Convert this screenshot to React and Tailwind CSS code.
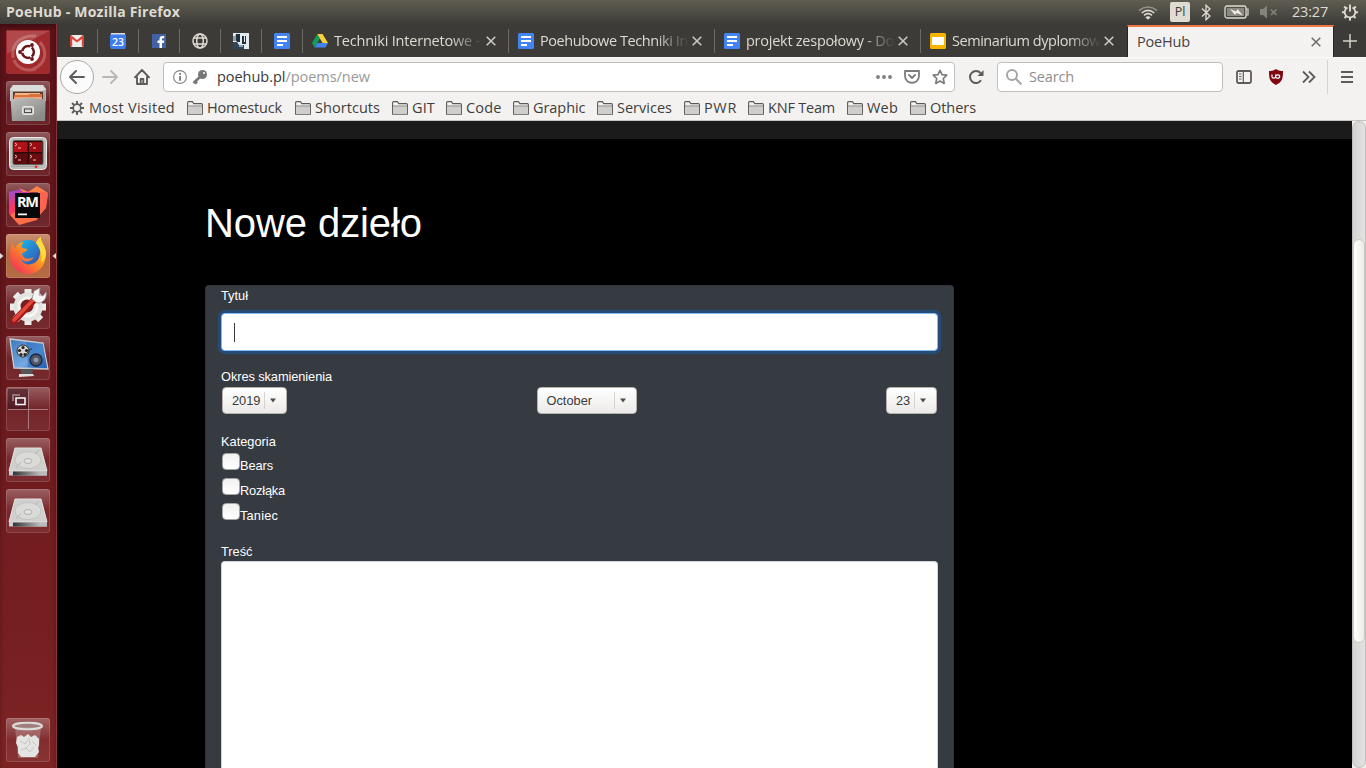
import { useLayoutEffect, useRef, useState } from "react";

/* Text run whose tracking is tuned so that it fills a given advance width. */
function Fit({ w, className = "", children }) {
  const ref = useRef(null);
  const [ls, setLs] = useState(0);
  useLayoutEffect(() => {
    const el = ref.current;
    const n = el.textContent.length;
    setLs((w - el.getBoundingClientRect().width) / n);
  }, [w]);
  return (
    <span ref={ref} className={"inline-block shrink-0 whitespace-pre " + className} style={{ letterSpacing: ls + "px" }}>
      {children}
    </span>
  );
}

/* ---------- top panel ---------- */

function TopPanel() {
  return (
    <header className="flex h-6 shrink-0 items-center bg-linear-to-b from-[#5f5d52] to-[#3d3c38] pl-1.5 text-[#dfdbd2]">
      <Fit w={174} className="text-[14px] leading-6 font-bold">PoeHub - Mozilla Firefox</Fit>
      <svg className="ml-auto mr-[12px] mt-px" width="20" height="16" viewBox="0 0 20 16" fill="none" stroke="#dfdbd2" strokeWidth="1.6">
        <path d="M1 5.5Q10-1.5 19 5.5" stroke="#96938a" />
        <path d="M3.7 8Q10 2.8 16.300 8" />
        <path d="M6 10.300Q10 7 14 10.300" />
        <path d="M7.300 12.300Q10 10 12.700 12.300L10 14.800z" fill="#dfdbd2" stroke="none" />
      </svg>
      <div className="flex h-5 w-5 items-center justify-center rounded-[2px] bg-[#dfdbd2] text-[12.5px] text-[#3c3b37]">Pl</div>
      <svg className="ml-[10px]" width="12" height="17" viewBox="0 0 12 17" fill="none" stroke="#dfdbd2" strokeWidth="1.300">
        <path d="M2 4.500l8 7.500-4 3.800V1.200l4 3.800-8 7.500" />
      </svg>
      <svg className="ml-[12px]" width="25" height="14" viewBox="0 0 25 14">
        <rect x="1" y="1" width="21" height="12" rx="2" fill="none" stroke="#dfdbd2" strokeWidth="1.300" />
        <rect x="3" y="3" width="17" height="8" fill="#8b887f" />
        <path d="M22 4h2v6H22" fill="none" stroke="#dfdbd2" strokeWidth="1.200" />
        <path d="M6 4l6 2.500 1.500-2.500 5.500 6.500-6.500-2.500-1.500 2z" fill="#efece5" />
      </svg>
      <svg className="ml-[11px]" width="18" height="14" viewBox="0 0 18 14">
        <path d="M0 4h3l4-3.500v13L3 10H0z" fill="#85827a" />
        <path d="M11 4.500l5.500 5.500m0-5.500L11 10" stroke="#85827a" strokeWidth="1.700" />
      </svg>
      <Fit w={36} className="ml-[14px] text-[14.5px] leading-6">23:27</Fit>
      <svg className="mr-[7px] ml-[13px]" width="18" height="18" viewBox="0 0 18 18" fill="none" stroke="#dfdbd2">
        <path d="M6.500 4.500a5.300 5.300 0 1 0 5 0" strokeWidth="1.700" />
        <path d="M9 1.500v7" strokeWidth="1.900" />
        <path d="M14 9.300h3M1 9.300h3M9 14.500v3M12.500 13l2 2M5.500 13l-2 2M12.800 5.500l2-2M5.200 5.500l-2-2" strokeWidth="2" />
      </svg>
    </header>
  );
}

/* ---------- launcher ---------- */

const UbuntuIcon = () => (
  <svg width="44" height="44" viewBox="0 0 44 44">
    <rect width="44" height="44" rx="3" fill="#a12a2c" />
    <path d="M7 28C5 14 14 5 30 6M34 12c8 10 6 22-7 27M30 39c-10 3-19-1-22-9" fill="none" stroke="#cf8583" strokeWidth="3" opacity=".5" />
    <path d="M1 1h42L1 24z" fill="#fff" opacity=".15" />
    <circle cx="22" cy="22" r="12" fill="#fff" />
    <circle cx="22" cy="22" r="5.800" fill="none" stroke="#6a161b" strokeWidth="2.700" />
    <path d="M22 22H10M22 22l5.500-9M22 22l5.500 9" stroke="#fff" strokeWidth="1.500" />
    <circle cx="22" cy="22" r="4.400" fill="#fff" />
    <g fill="#6a161b"><circle cx="14" cy="22" r="1.900" /><circle cx="26" cy="15" r="1.900" /><circle cx="26" cy="29" r="1.900" /></g>
  </svg>
);

const FilesIcon = () => (
  <svg width="44" height="44" viewBox="0 0 44 44">
    <defs><linearGradient id="fg" x1="0" y1="0" x2=".6" y2="1"><stop stopColor="#cbcbc9" /><stop offset="1" stopColor="#8b8b89" /></linearGradient></defs>
    <path d="M7 4h30l3 4v12H4V8z" fill="#dcdcda" />
    <path d="M7 10.500h30v9H7z" fill="#5c3a2c" />
    <path d="M9 12h25v2H9z" fill="#f1b887" /><path d="M8 14h14l2-1h12v6H8z" fill="#d9703f" />
    <path d="M8 16h28v2H8z" fill="#eda87b" />
    <path d="M4 9h3v9h6l2-1h14l1 1h7V9h3l-1 31H6z" fill="url(#fg)" />
    <rect x="16.500" y="25.500" width="11" height="8" rx="1.500" fill="#c9c9c7" stroke="#e8e8e8" />
    <rect x="18.500" y="28" width="7" height="3.500" fill="#ddd" stroke="#4d4d4d" />
  </svg>
);

const TerminatorIcon = () => (
  <svg width="44" height="44" viewBox="0 0 44 44">
    <rect x="3.500" y="5.500" width="37" height="32" rx="4" fill="#bdbdb9" stroke="#ecece9" />
    <rect x="7" y="8.500" width="30" height="24" rx="1.500" fill="#2c0809" stroke="#5d5d59" />
    <g><path d="M8 10h13.500v10H8z" fill="#b01018" /><path d="M23 10h13v10H23z" fill="#9a0d13" /><path d="M8 21.500h13.500V32H8z" fill="#5e0b0f" /><path d="M23 21.500h13V32H23z" fill="#6b0c11" /></g>
    <g stroke="#f5b8b8" fill="none" strokeWidth="1"><path d="M9 11l2 1.500L9 14m3 2h3M24 11l2 1.500-2 1.500m3 2h3M9 23l2 1.500L9 26m3 2h3M24 23l2 1.500-2 1.500m3 2h3" /></g>
    <path d="M5 34.500h28" stroke="#a3a39f" /><circle cx="30" cy="34.800" r="1.300" fill="#e22" />
  </svg>
);

const RubyMineIcon = () => (
  <svg width="44" height="44" viewBox="0 0 44 44">
    <defs>
      <linearGradient id="rm" x1="0" y1="0" x2=".4" y2="1"><stop stopColor="#8a52f0" /><stop offset=".5" stopColor="#f9336d" /><stop offset="1" stopColor="#ff4a50" /></linearGradient>
    </defs>
    <path d="M3 9l13-3 12 5-3 28L3 31z" fill="url(#rm)" />
    <path d="M13 5l9 4 9-6 11 7-2 15-8 9V9H17z" fill="#fd8348" />
    <path d="M34 8l8 2-2 15-6 6z" fill="#f9525c" opacity=".6" />
    <path d="M4 32l6-4h24l-3 9-18 5z" fill="#ff6f47" />
    <rect x="9" y="10" width="25" height="25" fill="#080808" />
    <text x="11" y="23.500" fill="#fff" fontSize="14.500" fontWeight="700" fontFamily="Open Sans, sans-serif" textLength="22">RM</text>
    <path d="M12 30.500h9v1.800h-9z" fill="#fff" />
  </svg>
);

const FirefoxIcon = () => (
  <svg width="44" height="44" viewBox="0 0 44 44">
    <defs>
      <linearGradient id="ffa" x1="1" y1="0" x2=".1" y2="1"><stop stopColor="#ffe93f" /><stop offset=".45" stopColor="#ff9a1f" /><stop offset="1" stopColor="#f3245f" /></linearGradient>
      <linearGradient id="ffb" x1="0" y1="0" x2="1" y2="1"><stop stopColor="#19c5f0" /><stop offset="1" stopColor="#3a3fa8" /></linearGradient>
    </defs>
    <circle cx="22" cy="20" r="14" fill="url(#ffb)" />
    <path d="M7 9c0 3 1 4 2 5 2-4 5-6 9-6-2 2-3 4-2 6l5 1c0 3-4 3-5 5 1 5 7 6 12 3-3 5-10 6-13 2 2 8 17 8 19-5 1-6-2-9-4-11 1-3 3-5 5-6-1 5 5 9 5 17 0 12-8 20-18 20S4 32 4 22c0-6 1-10 3-13z" fill="url(#ffa)" />
    <path d="M30 9c1-3 3-5 5-6-1 5 5 9 5 17-1 5-3 8-5 9 2-9-1-14-5-20z" fill="#ffda3b" />
  </svg>
);

const SettingsIcon = () => (
  <svg width="44" height="44" viewBox="0 0 44 44">
    <g stroke="#ececea" strokeWidth="7"><path d="M22 4v36M4 22h36M9.300 9.300l25.400 25.400M34.700 9.300L9.300 34.700" /></g>
    <circle cx="22" cy="22" r="14.500" fill="#e3e3df" />
    <circle cx="22" cy="22" r="9" fill="none" stroke="#f5f5f3" strokeWidth="3" />
    <circle cx="21" cy="21" r="6.500" fill="#742124" />
    <path d="M8 36L28 15" stroke="#a61515" strokeWidth="6.500" strokeLinecap="round" />
    <path d="M8 35L27 15" stroke="#e04a3c" strokeWidth="3.500" strokeLinecap="round" />
    <path d="M26 14l2-8 6-3-1 7 4 1 3-4c1 6-2 11-9 11z" fill="#f4f4f2" stroke="#9c9c99" strokeWidth=".8" />
  </svg>
);

const DisplayIcon = () => (
  <svg width="44" height="44" viewBox="0 0 44 44">
    <defs><linearGradient id="dg" x1="0" y1="0" x2="1" y2="1"><stop stopColor="#3c78bd" /><stop offset=".6" stopColor="#75a9e0" /><stop offset="1" stopColor="#2456a0" /></linearGradient></defs>
    <path d="M4 3l33 4 5 26-34-1z" fill="url(#dg)" stroke="#c8ccd0" strokeWidth="1.300" />
    <path d="M20 6l17 2 4 24-19-1z" fill="#1f68bd" opacity=".5" />
    <path d="M14 33h13l-1 6H16z" fill="#555" /><path d="M13 38h14l1 2-15 1z" fill="#ddd" />
    <circle cx="17" cy="15" r="6" fill="#d6d6d3" stroke="#333" />
    <g fill="#222"><circle cx="17" cy="11.500" r="1.600" /><circle cx="13.500" cy="14.500" r="1.600" /><circle cx="20.500" cy="14.500" r="1.600" /><circle cx="15" cy="18.500" r="1.600" /><circle cx="19" cy="18.500" r="1.600" /></g>
    <path d="M19 20l5-7 2 0" stroke="#333" fill="none" />
    <circle cx="30" cy="24" r="6" fill="#4d5666" stroke="#1c2a42" strokeWidth="1.500" /><circle cx="30" cy="24" r="2.500" fill="#8d97a8" />
  </svg>
);

const WorkspaceIcon = () => (
  <svg width="44" height="44" viewBox="0 0 44 44">
    <path d="M2 2h20v20H2z" fill="#320c18" opacity=".5" />
    <path d="M22.500 2v40M2 22.500h40" stroke="#a87b7e" />
    <path d="M7 14V8h7" fill="none" stroke="#8f7478" strokeWidth="2" />
    <rect x="10" y="11" width="9" height="6.500" fill="none" stroke="#fff" strokeWidth="1.500" />
  </svg>
);

const DriveIcon = () => (
  <svg width="44" height="44" viewBox="0 0 44 44">
    <defs><linearGradient id="hd"><stop stopColor="#333" /><stop offset=".8" stopColor="#bbb" /></linearGradient></defs>
    <path d="M9 10h26l6 23H3z" fill="#cfcfcd" stroke="#e3e3e1" />
    <ellipse cx="22" cy="22" rx="13" ry="8.500" fill="#dadad8" stroke="#c2c2c0" />
    <ellipse cx="22" cy="23" rx="4" ry="2.500" fill="#e2e2e0" stroke="#b2b2b0" />
    <path d="M10 30l5-6M33 12l-4 4" stroke="#b5b5b3" />
    <path d="M3 33h38v4.500H3z" fill="#ccc" /><path d="M7 33.500h34v4H7z" fill="url(#hd)" />
  </svg>
);

const TrashIcon = () => (
  <svg width="44" height="44" viewBox="0 0 44 44">
    <path d="M9 9h26l-3 31H12z" fill="#c6a3a2" opacity=".4" />
    <path d="M11 19l4-2 3 2 4-3 3 3 4-2 4 4v6l-1 3 1 4-4 5H15l-3-4v-6l-2-4z" fill="#e4e4e2" />
    <path d="M14 23l5 3 3-4m4 1l4 4m-15 5l5-2 4 4 4-5M23 20l1 6-5 5" stroke="#c6c6c3" fill="none" />
    <ellipse cx="21.500" cy="8" rx="14.500" ry="3.300" fill="#aaa" opacity=".5" />
    <ellipse cx="21.500" cy="8" rx="14.500" ry="3.300" fill="none" stroke="#dcdcd9" strokeWidth="2" />
  </svg>
);

function Tile({ icon: Icon, active }) {
  return (
    <div className={"flex h-11 w-11 shrink-0 overflow-hidden rounded-[3px] shadow-[inset_0_0_0_1px_rgba(255,255,255,0.13)] " + (active ? "bg-linear-to-b from-[#c98f70] via-[#b0683f] to-[#b66c45]" : "bg-linear-to-b from-white/30 via-white/5 to-white/8")}>
      <Icon />
    </div>
  );
}

const TILES = [UbuntuIcon, FilesIcon, TerminatorIcon, RubyMineIcon, FirefoxIcon, SettingsIcon, DisplayIcon, WorkspaceIcon, DriveIcon, DriveIcon];

function Launcher() {
  return (
    <aside className="relative flex w-[57px] shrink-0 flex-col items-start gap-[7px] border-r border-[#873538] bg-linear-to-b from-[#5a1218] via-[#6b191d] to-[#7d2324] pt-1.5 pb-1.5 pl-1.5 shadow-[inset_0_3px_4px_rgba(0,0,0,0.3)]">
      {TILES.map((icon, i) => <Tile key={i} icon={icon} active={i === 4} />)}
      <div className="mt-auto"><Tile icon={TrashIcon} /></div>
      <svg className="absolute top-[228px] left-0" width="56" height="8" viewBox="0 0 56 8" fill="#ddd"><path d="M0 1l3.500 3-3.500 3zM56 1l-3.500 3 3.500 3z" /></svg>
    </aside>
  );
}

/* ---------- tabs ---------- */

const Gmail = () => <svg width="14" height="12" viewBox="0 0 14 12"><path d="M1 0h12v12H1z" fill="#eee" /><path d="M0 1v10.500h2.200V4L7 7.500 11.800 4v7.500H14V1L13 0 7 5 1 0z" fill="#d9473b" /></svg>;
const Calendar = () => (
  <svg width="16" height="16" viewBox="0 0 16 16"><path d="M1 0h14v3H1z" fill="#ddd" /><path d="M0 1.500h16V13l-1 3H1l-1-3z" fill="#3f7cec" /><text x="8" y="12.500" textAnchor="middle" fontSize="10.500" fontWeight="600" fill="#fff" fontFamily="Open Sans, sans-serif">23</text></svg>
);
const Facebook = () => <svg width="14" height="14" viewBox="0 0 14 14"><path d="M0 0h14v14H0z" fill="#4361a5" /><path d="M7.500 14V9H5.500V6.500h2V5c0-2 1-3 3-3h1.700v2.300H11c-.8 0-1 .3-1 1v1.200h2.200L11.800 9H10v5z" fill="#fff" /></svg>;
const Globe = () => <svg width="16" height="16" viewBox="0 0 16 16" fill="none" stroke="#dfdbd2" strokeWidth="1.500"><circle cx="8" cy="8" r="7" /><ellipse cx="8" cy="8" rx="3.300" ry="7" /><path d="M2 5h12M2 11h12" /></svg>;
const Mask = () => (
  <svg width="16" height="16" viewBox="0 0 16 16">
    <path d="M0 0h16v16H0z" fill="#e3ebee" />
    <path d="M0 9h4l2 3h5v4H0z" fill="#31455a" /><path d="M3 1h4v8H4L2 6zM9 3h2v6h1V3h1v8H9z" fill="#22303e" />
    <path d="M0 3h3v5H0zM6 12h4v2H6z" fill="#8aa3b5" />
  </svg>
);
const Docs = () => <svg className="shrink-0" width="16" height="16" viewBox="0 0 16 16"><rect width="16" height="16" rx="1.500" fill="#4384f4" /><path d="M3 4h10M3 8h10M3 12h6" stroke="#fff" strokeWidth="2" /></svg>;
const Slides = () => <svg className="shrink-0" width="16" height="16" viewBox="0 0 16 16"><rect width="16" height="16" rx="1.500" fill="#f5b400" /><path d="M2 4h12v8H2z" fill="#fff" /></svg>;
const Drive = () => <svg className="shrink-0" width="16" height="14" viewBox="0 0 16 14"><path d="M5.300 0L0 9l2.700 4.500L8 4.500z" fill="#0f9d58" /><path d="M5.300 0h5.200L16 9h-5.400z" fill="#fdd03b" /><path d="M5.400 9H16l-2.700 4.500H2.700z" fill="#4384f4" /></svg>;
const Cross = ({ color }) => <svg className="shrink-0" width="10" height="10" viewBox="0 0 10 10"><path d="M.7.7l8.600 8.600M9.300.7L.7 9.300" stroke={color} strokeWidth="1.600" /></svg>;

const PINNED = [Gmail, Calendar, Facebook, Globe, Mask, Docs];
const TABS = [
  { icon: Drive, text: "Techniki Internetowe -", w: 146 },
  { icon: Docs, text: "Poehubowe Techniki In", w: 148 },
  { icon: Docs, text: "projekt zespołowy - Do", w: 148 },
  { icon: Slides, text: "Seminarium dyplomow", w: 148 },
];

function TabBar() {
  return (
    <div className="flex h-[33px] shrink-0 bg-[#3c3b37] text-[14.5px] text-[#dfdbd2]">
      {PINNED.map((Icon, i) => (
        <div key={i} className="flex w-[41px] shrink-0 items-center">
          <div className="flex h-full flex-1 items-center justify-center"><Icon /></div>
          <div className="h-6 w-px bg-[#6c6a64]" />
        </div>
      ))}
      {TABS.map(({ icon: Icon, text, w }, i) => (
        <div key={i} className="flex w-[206px] shrink-0 items-center pl-[9px]">
          <Icon />
          <div className="ml-1.5 h-[33px] w-[149px] mask-r-from-78% mask-r-to-100%">
            <Fit w={w} className="leading-[33px]">{text}</Fit>
          </div>
          <div className="ml-[3px] flex flex-1"><Cross color="#cbc8c0" /></div>
          {i < 3 && <div className="h-6 w-px bg-[#6c6a64]" />}
        </div>
      ))}
      <div className="mt-px flex h-8 w-[207px] shrink-0 items-center justify-between border-x border-t-2 border-x-[#25241f] border-t-[#f07746] bg-[#f4f2f1] pr-3 pl-[9px] text-[#45423f]">
        <Fit w={53} className="leading-[30px]">PoeHub</Fit>
        <Cross color="#706d69" />
      </div>
      <div className="flex flex-1 items-center justify-center">
        <svg width="14" height="14" viewBox="0 0 14 14"><path d="M7 0v14M0 7h14" stroke="#d5d1c8" strokeWidth="1.500" /></svg>
      </div>
    </div>
  );
}

/* ---------- navigation toolbar ---------- */

function NavBar() {
  return (
    <div className="flex h-[39px] shrink-0 items-center border-t border-[#fbfaf9] pl-[3px] text-[14.5px]">
      <div className="flex h-[34px] w-[34px] items-center justify-center rounded-full border border-[#aaa8a6] bg-[#fbfbfb]">
        <svg width="16" height="14" viewBox="0 0 16 14" fill="none" stroke="#5c5c5c" strokeWidth="1.900" strokeLinecap="round"><path d="M1 7h14M7 1L1 7l6 6" strokeLinejoin="round" /></svg>
      </div>
      <svg className="ml-2" width="16" height="14" viewBox="0 0 16 14" fill="none" stroke="#b8b7b6" strokeWidth="1.900" strokeLinecap="round"><path d="M1 7h14M9 1l6 6-6 6" strokeLinejoin="round" /></svg>
      <svg className="ml-4" width="16" height="16" viewBox="0 0 16 16" fill="none" stroke="#5c5c5c" strokeWidth="1.900" strokeLinejoin="round" strokeLinecap="round"><path d="M1 8.300L8 1l7 7.300M3 8v7h10V8M6.700 14.500V10h2.600v4.500" /></svg>
      <div className="ml-[13px] flex h-[30px] w-[792px] shrink-0 items-center rounded-[4px] border border-[#c1bebb] bg-white pr-1.5 pl-2">
        <svg width="16" height="16" viewBox="0 0 16 16"><circle cx="8" cy="8" r="6.400" fill="none" stroke="#858585" strokeWidth="1.100" /><path d="M7.200 7h1.800v4.700H7.200zM7.200 4h1.800v1.800H7.200z" fill="#777" /></svg>
        <svg className="ml-1" width="16" height="16" viewBox="0 0 16 16"><path d="M1.500 14L9 7M3 12.500l2 2" stroke="#777" strokeWidth="2.700" /><circle cx="10.500" cy="5.500" r="4.500" fill="#777" /><circle cx="12" cy="4" r="1" fill="#fff" /></svg>
        <Fit w={153} className="ml-[9px] leading-7 text-[#999]"><span className="text-[#383838]">poehub.pl</span>/poems/new</Fit>
        <svg className="ml-auto" width="16" height="4" viewBox="0 0 16 4" fill="#7c7c7c"><circle cx="2" cy="2" r="1.900" /><circle cx="8" cy="2" r="1.900" /><circle cx="14" cy="2" r="1.900" /></svg>
        <svg className="ml-3" width="16" height="14" viewBox="0 0 16 14" fill="none" stroke="#7c7c7c" strokeWidth="1.800" strokeLinecap="round" strokeLinejoin="round"><path d="M1 1h14v5c0 9-14 9-14 0zM5 5l3 3 3-3" /></svg>
        <svg className="ml-3" width="16" height="16" viewBox="0 0 16 16" fill="none" stroke="#7c7c7c" strokeWidth="1.700" strokeLinejoin="round"><path d="M8 1.300l2 4.300 4.800.6-3.500 3.300.9 4.900L8 12l-4.200 2.400.9-4.900L1.200 6.200 6 5.600z" /></svg>
      </div>
      <svg className="ml-[13px]" width="16" height="16" viewBox="0 0 16 16" fill="none" stroke="#5c5c5c" strokeWidth="2"><path d="M13 11.300A6 6 0 1 1 12.500 4" /><path d="M15.500 1v6H9.500z" fill="#5c5c5c" stroke="none" /></svg>
      <div className="ml-[13px] flex h-[30px] w-[226px] shrink-0 items-center rounded-[4px] border border-[#c1bebb] bg-white pl-2">
        <svg width="16" height="16" viewBox="0 0 16 16" fill="none" stroke="#a5a5a5" strokeWidth="2"><circle cx="6" cy="6" r="5" /><path d="M9.500 9.500l6 6" /></svg>
        <Fit w={45} className="ml-[7px] leading-7 text-[#8e8e8e]">Search</Fit>
      </div>
      <svg className="ml-[13px]" width="16" height="14" viewBox="0 0 16 14" fill="none" stroke="#5c5c5c"><rect x="1" y="1" width="14" height="12" rx="1.500" strokeWidth="1.800" /><path d="M7.300 1v12" strokeWidth="1.200" /><path d="M3 4h2.500M3 6.500h2.500M3 9h2.500" /></svg>
      <svg className="ml-[17px]" width="14" height="16" viewBox="0 0 14 16"><path d="M7 0c2 1.500 4 2 7 2 0 8-1 11-7 14C1 13 0 10 0 2c3 0 5-.5 7-2z" fill="#800610" /><path d="M3 5.500v2.300c0 1.700 3.600 1.700 3.600 0V5.500M6.700 7.500c0-2.300 4-2.300 4 0s-4 2.300-4 0z" fill="none" stroke="#fff" strokeWidth="1.200" /></svg>
      <svg className="ml-[19px]" width="14" height="14" viewBox="0 0 14 14" fill="none" stroke="#5c5c5c" strokeWidth="1.800"><path d="M1 1.500L6.500 7 1 12.500M7 1.500L12.500 7 7 12.500" /></svg>
      <div className="ml-[11px] h-[34px] w-px bg-[#d6d4d2]" />
      <svg className="ml-[13px]" width="12" height="12" viewBox="0 0 12 12" stroke="#5c5c5c" strokeWidth="2"><path d="M0 1h12M0 6h12M0 11h12" /></svg>
    </div>
  );
}

const Folder = () => (
  <svg className="shrink-0" width="16" height="14" viewBox="0 0 16 14"><path d="M.6 13.200V1.600Q.6.6 1.600.6h3.800l1.400 2h7.600q1 0 1 1v9.600z" fill="#f3f2f1" stroke="#5b5b5a" strokeWidth="1.100" /><path d="M1.200 5.500h13.600v7H1.200z" fill="#cfcecc" /><path d="M1 5h14" stroke="#777" strokeWidth=".9" /></svg>
);

const BOOKMARKS = [
  ["Homestuck", 75, "w-[108px]"], ["Shortcuts", 65, "w-[97px]"], ["GIT", 23, "w-[54px]"], ["Code", 35.500, "w-[67px]"], ["Graphic", 52.500, "w-[84px]"],
  ["Services", 55, "w-[87px]"], ["PWR", 33, "w-[64px]"], ["KNF Team", 67, "w-[99px]"], ["Web", 31, "w-[63px]"], ["Others", 46, "w-[66px]"],
];

function Bookmarks() {
  return (
    <div className="flex h-[25px] shrink-0 items-center border-b border-[#c6c3c0] pb-px pl-[13px] text-[14.5px] leading-[22px] text-[#403e3c]">
      <div className="flex w-[117px] items-center">
        <svg width="14" height="14" viewBox="0 0 14 14" fill="none" stroke="#5c5c5c"><circle cx="7" cy="7" r="3.800" strokeWidth="1.700" /><path d="M7 0v3M7 11v3M0 7h3M11 7h3M2 2l2 2M10 10l2 2M12 2l-2 2M4 10l-2 2" strokeWidth="1.900" /></svg>
        <Fit w={86} className="ml-[5px]">Most Visited</Fit>
      </div>
      {BOOKMARKS.map(([t, w, cls]) => (
        <div key={t} className={"flex shrink-0 items-center gap-1 " + cls}><Folder /><Fit w={w}>{t}</Fit></div>
      ))}
    </div>
  );
}

/* ---------- page ---------- */

function Select({ value, className }) {
  return (
    <div className={"flex h-[27px] items-center rounded-[4px] border border-[#b5b2ae] bg-linear-to-b from-white to-[#ebeae8] pr-[10px] pl-[9px] text-[#3b3b3b] " + className}>
      <span className="flex-1">{value}</span>
      <span className="h-[17px] w-px bg-[#d5d3d1]" />
      <svg className="ml-[5px]" width="6" height="5" viewBox="0 0 6 5"><path d="M0 .5h6l-3 4z" fill="#4d4d4d" /></svg>
    </div>
  );
}

function PoemForm() {
  return (
    <form className="flex w-[749px] flex-1 flex-col items-stretch rounded-t-[4px] border border-b-0 border-[#303338] bg-[#363a41] px-[15px] text-[12.8px] leading-[19px] text-white">
      <label>Tytuł</label>
      <div className="mt-2 flex h-[38px] shrink-0 items-center rounded-[4px] border border-[#80bdff] bg-white pl-3 shadow-[0_0_0_3.2px_#264c76]">
        <span className="h-[19px] w-px bg-[#333a44]" />
      </div>
      <label className="mt-4"><Fit w={111}>Okres skamienienia</Fit></label>
      <div className="mt-px flex justify-between px-px">
        <Select value="2019" className="w-[65px]" />
        <Select value="October" className="w-[100px]" />
        <Select value="23" className="w-[51px]" />
      </div>
      <label className="mt-[18px]">Kategoria</label>
      {[["Bears", 33], ["Rozłąka", 45], ["Taniec", 38]].map(([c, w]) => (
        <div key={c} className="flex h-[25px] shrink-0 items-start pl-px">
          <span className="mt-[2px] h-[17px] w-[18px] rounded-[4px] border-[1.5px] border-[#a5a5a4] bg-linear-to-b from-[#f1f1f0] to-white" />
          <span className="mt-[5px]"><Fit w={w}>{c}</Fit></span>
        </div>
      ))}
      <label className="mt-4">Treść</label>
      <div className="flex-1 rounded-t-[4px] border border-b-0 border-[#ced4da] bg-white" />
    </form>
  );
}

export default function App() {
  return (
    <div className="flex h-[768px] w-[1366px] flex-col overflow-hidden bg-black font-['Open_Sans',sans-serif]">
      <TopPanel />
      <div className="flex min-h-0 flex-1">
        <Launcher />
        <div className="flex w-[1309px] flex-col bg-[#f4f2f1]">
          <TabBar />
          <NavBar />
          <Bookmarks />
          <div className="flex min-h-0 flex-1">
            <main className="flex w-[1295px] flex-col bg-black font-['Liberation_Sans',sans-serif]">
              <div className="h-[18px] shrink-0 bg-[#1b1b1b]" />
              <div className="flex flex-1 flex-col pt-[60px] pl-[148px]">
                <h1 className="mb-[38px] text-[40px] leading-[48px] text-white"><Fit w={217}>Nowe dzieło</Fit></h1>
                <PoemForm />
              </div>
            </main>
            <div className="flex w-[14px] flex-col bg-[#f1efed]">
              <div className="flex-1 rounded-full border border-[#c3bdb8] bg-linear-to-r from-[#d3d3d3] to-[#e3e3e3] pt-[117px]">
                <div className="h-[404px] rounded-full border border-[#cfc9c3] bg-linear-to-r from-white to-[#ecebe9]" />
              </div>
            </div>
          </div>
        </div>
      </div>
    </div>
  );
}
